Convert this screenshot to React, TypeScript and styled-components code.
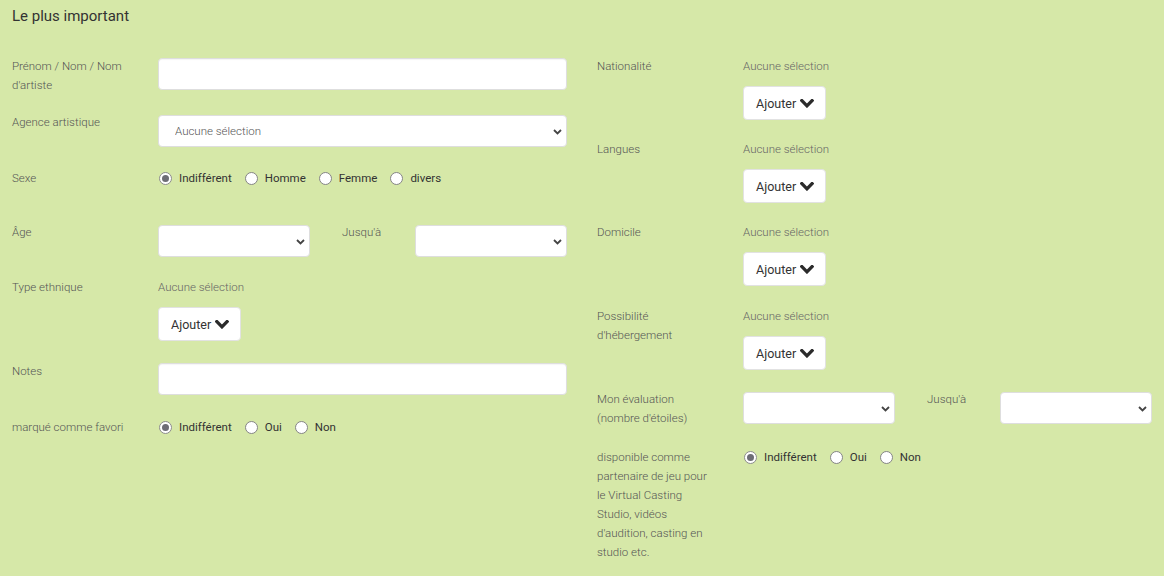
import React from 'react';
import styled, { createGlobalStyle } from 'styled-components';

const Global = createGlobalStyle`
  html, body { margin: 0; padding: 0; background: #d6e8a8; }
  body { font-family: Roboto, "Noto Sans", Arial, sans-serif; color: #333; }
  * { box-sizing: border-box; }
`;

const Page = styled.div`
  width: 1164px;
  min-height: 576px;
  padding: 6px 12px 0;
`;

const Title = styled.h3`
  margin: 0;
  font-size: 15px;
  font-weight: 400;
  line-height: 20px;
  color: #333;
`;

const Columns = styled.div`
  display: grid;
  grid-template-columns: 555px 555px;
  column-gap: 30px;
  margin-top: 31px;
`;

const Column = styled.div`
  display: flex;
  flex-direction: column;
`;

const Row = styled.div<{ $pitch?: number }>`
  display: grid;
  grid-template-columns: 146px 1fr;
  align-items: start;
  min-height: ${(p) => p.$pitch ?? 56}px;
`;

const Label = styled.div`
  font-size: 11.5px;
  font-weight: 300;
  line-height: 19px;
  color: #555;
  padding-right: 28px;
`;

const Control = styled.div`
  min-width: 0;
`;

const TextInput = styled.input`
  display: block;
  width: 100%;
  height: 32px;
  margin-top: 1px;
  border: 1px solid #dedede;
  border-radius: 4px;
  background: #fff;
  box-shadow: inset 0 1px 1px rgba(0, 0, 0, 0.04);
  outline: none;
`;

const SelectWrap = styled.div<{ $width?: number }>`
  position: relative;
  margin-top: 2px;
  ${(p) => (p.$width ? `flex: 0 0 ${p.$width}px;` : 'flex: 1 1 auto;')}
`;

const Select = styled.select`
  display: block;
  width: 100%;
  height: 32px;
  appearance: none;
  -webkit-appearance: none;
  border: 1px solid #dedede;
  border-radius: 4px;
  background: #fff;
  padding: 0 24px 0 16px;
  font-family: Roboto, "Noto Sans", Arial, sans-serif;
  font-size: 11.5px;
  font-weight: 300;
  color: #555;
  outline: none;
`;

const Caret = styled.svg`
  position: absolute;
  right: 5px;
  top: 14px;
  width: 9px;
  height: 6px;
  pointer-events: none;
`;

const RangeLine = styled.div`
  display: flex;
  align-items: flex-start;
`;

const InlineLabel = styled.div`
  flex: 0 0 73px;
  margin-left: 32px;
  font-size: 11.5px;
  font-weight: 300;
  line-height: 19px;
  color: #555;
`;

const Placeholder = styled.div`
  font-size: 11.5px;
  font-weight: 300;
  line-height: 19px;
  color: #666;
`;

const AddButton = styled.button`
  display: inline-flex;
  align-items: center;
  gap: 4px;
  height: 34px;
  margin-top: 10px;
  padding: 0 11px 0 12px;
  border: 1px solid #e2e2e2;
  border-radius: 4px;
  background: #fff;
  font-family: Roboto, "Noto Sans", Arial, sans-serif;
  font-size: 12.5px;
  font-weight: 400;
  color: #333;
`;

const ChevronIcon = styled.svg`
  width: 14px;
  height: 9px;
  margin-top: 1px;
`;

const RadioGroup = styled.div`
  display: flex;
  align-items: center;
  height: 19px;
  gap: 13px;
  padding-left: 1px;
`;

const RadioOption = styled.label`
  display: inline-flex;
  align-items: center;
  gap: 7px;
  font-size: 11.5px;
  font-weight: 400;
  color: #333;
  line-height: 19px;
`;

const RadioDot = styled.span<{ $checked?: boolean }>`
  position: relative;
  width: 13px;
  height: 13px;
  border-radius: 50%;
  border: 1px solid ${(p) => (p.$checked ? '#8c8c8c' : '#858585')};
  background: #fff;
  &::after {
    content: '';
    position: absolute;
    inset: 2px;
    border-radius: 50%;
    background: ${(p) => (p.$checked ? '#6d6d75' : 'transparent')};
  }
`;

const SelectBox = ({ width, text }: { width?: number; text?: string }) => (
  <SelectWrap $width={width}>
    <Select defaultValue="">
      <option value="">{text ?? ''}</option>
    </Select>
    <Caret viewBox="0 0 9 6">
      <path d="M1 1l3.5 3.5L8 1" fill="none" stroke="#444" strokeWidth="1.8" />
    </Caret>
  </SelectWrap>
);

const Radios = ({ options }: { options: string[] }) => (
  <RadioGroup>
    {options.map((o, i) => (
      <RadioOption key={o}>
        <RadioDot $checked={i === 0} />
        {o}
      </RadioOption>
    ))}
  </RadioGroup>
);

const Chevron = () => (
  <ChevronIcon viewBox="116 590 1570 990" preserveAspectRatio="none">
    <path
      fill="#2b2b2b"
      d="M1683 808l-742 741q-19 19-45 19t-45-19l-742-741q-19-19-19-45.5t19-45.5l166-165q19-19 45-19t45 19l531 531 531-531q19-19 45-19t45 19l166 165q19 19 19 45.5t-19 45.5z"
    />
  </ChevronIcon>
);

const MultiPick = () => (
  <Control>
    <Placeholder>Aucune sélection</Placeholder>
    <AddButton>
      Ajouter <Chevron />
    </AddButton>
  </Control>
);

const Range = () => (
  <RangeLine>
    <SelectBox width={152} />
    <InlineLabel>Jusqu'à</InlineLabel>
    <SelectBox />
  </RangeLine>
);

export default function App() {
  return (
    <Page>
      <Global />
      <Title>Le plus important</Title>
      <Columns>
        <Column>
          <Row $pitch={56}>
            <Label>Prénom / Nom / Nom d'artiste</Label>
            <Control>
              <TextInput />
            </Control>
          </Row>
          <Row $pitch={56}>
            <Label>Agence artistique</Label>
            <Control>
              <SelectBox text="Aucune sélection" />
            </Control>
          </Row>
          <Row $pitch={54}>
            <Label>Sexe</Label>
            <Radios options={['Indifférent', 'Homme', 'Femme', 'divers']} />
          </Row>
          <Row $pitch={55}>
            <Label>Âge</Label>
            <Range />
          </Row>
          <Row $pitch={84}>
            <Label>Type ethnique</Label>
            <MultiPick />
          </Row>
          <Row $pitch={56}>
            <Label>Notes</Label>
            <Control>
              <TextInput />
            </Control>
          </Row>
          <Row>
            <Label>marqué comme favori</Label>
            <Radios options={['Indifférent', 'Oui', 'Non']} />
          </Row>
        </Column>
        <Column>
          <Row $pitch={83}>
            <Label>Nationalité</Label>
            <MultiPick />
          </Row>
          <Row $pitch={83}>
            <Label>Langues</Label>
            <MultiPick />
          </Row>
          <Row $pitch={84}>
            <Label>Domicile</Label>
            <MultiPick />
          </Row>
          <Row $pitch={83}>
            <Label>Possibilité d'hébergement</Label>
            <MultiPick />
          </Row>
          <Row $pitch={58}>
            <Label>Mon évaluation (nombre d'étoiles)</Label>
            <Range />
          </Row>
          <Row>
            <Label>disponible comme partenaire de jeu pour le Virtual Casting Studio, vidéos d'audition, casting en studio etc.</Label>
            <Radios options={['Indifférent', 'Oui', 'Non']} />
          </Row>
        </Column>
      </Columns>
    </Page>
  );
}
